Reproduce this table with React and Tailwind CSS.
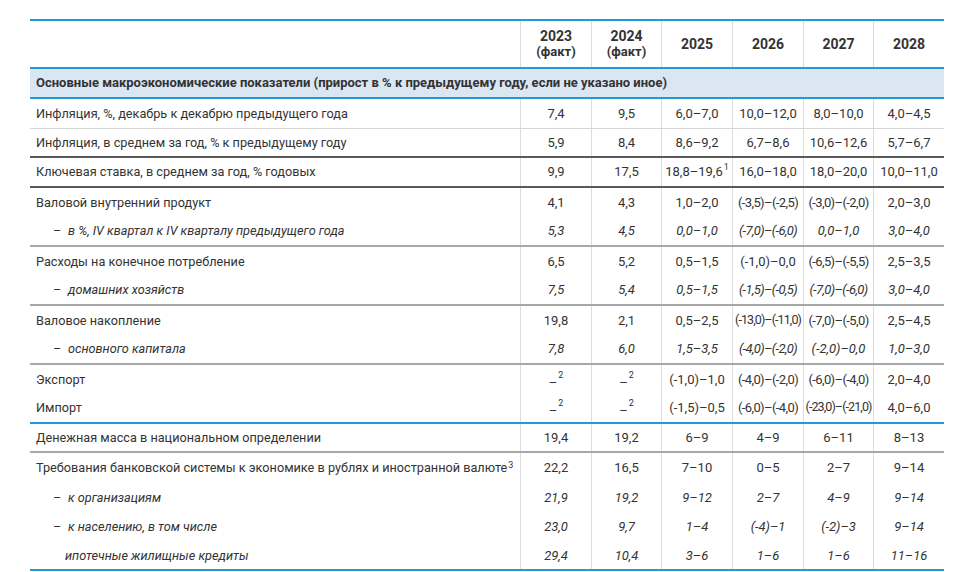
import React from "react";

const cols = ["w-[71px]", "w-[70px]", "w-[71px]", "w-[71px]", "w-[70px]", "w-[71px]"];

const lineClass = {
  light: "border-b border-[#d6d6d6]",
  dark: "border-b-2 border-[#5a5a5a]",
  mid: "border-b-2 border-[#a8a8a8]",
  blue: "border-b-2 border-[#1f9bd7]",
  none: "",
};

const rows = [
  { label: "Инфляция, %, декабрь к декабрю предыдущего года", vals: ["7,4", "9,5", "6,0–7,0", "10,0–12,0", "8,0–10,0", "4,0–4,5"], line: "light" },
  { label: "Инфляция, в среднем за год, % к предыдущему году", vals: ["5,9", "8,4", "8,6–9,2", "6,7–8,6", "10,6–12,6", "5,7–6,7"], line: "dark" },
  { label: "Ключевая ставка, в среднем за год, % годовых", vals: ["9,9", "17,5", "18,8–19,6", "16,0–18,0", "18,0–20,0", "10,0–11,0"], sup: { 2: "1" }, line: "dark" },
  { label: "Валовой внутренний продукт", vals: ["4,1", "4,3", "1,0–2,0", "(-3,5)–(-2,5)", "(-3,0)–(-2,0)", "2,0–3,0"], line: "none" },
  { label: "в %, IV квартал к IV кварталу предыдущего года", sub: true, vals: ["5,3", "4,5", "0,0–1,0", "(-7,0)–(-6,0)", "0,0–1,0", "3,0–4,0"], line: "mid" },
  { label: "Расходы на конечное потребление", vals: ["6,5", "5,2", "0,5–1,5", "(-1,0)–0,0", "(-6,5)–(-5,5)", "2,5–3,5"], line: "none" },
  { label: "домашних хозяйств", sub: true, vals: ["7,5", "5,4", "0,5–1,5", "(-1,5)–(-0,5)", "(-7,0)–(-6,0)", "3,0–4,0"], line: "mid" },
  { label: "Валовое накопление", vals: ["19,8", "2,1", "0,5–2,5", "(-13,0)–(-11,0)", "(-7,0)–(-5,0)", "2,5–4,5"], line: "none" },
  { label: "основного капитала", sub: true, vals: ["7,8", "6,0", "1,5–3,5", "(-4,0)–(-2,0)", "(-2,0)–0,0", "1,0–3,0"], line: "mid" },
  { label: "Экспорт", vals: ["–", "–", "(-1,0)–1,0", "(-4,0)–(-2,0)", "(-6,0)–(-4,0)", "2,0–4,0"], sup: { 0: "2", 1: "2" }, line: "none" },
  { label: "Импорт", vals: ["–", "–", "(-1,5)–0,5", "(-6,0)–(-4,0)", "(-23,0)–(-21,0)", "4,0–6,0"], sup: { 0: "2", 1: "2" }, line: "blue" },
  { label: "Денежная масса в национальном определении", vals: ["19,4", "19,2", "6–9", "4–9", "6–11", "8–13"], line: "mid" },
  { label: "Требования банковской системы к экономике в рублях и иностранной валюте", labelSup: "3", vals: ["22,2", "16,5", "7–10", "0–5", "2–7", "9–14"], line: "none" },
  { label: "к организациям", sub: true, vals: ["21,9", "19,2", "9–12", "2–7", "4–9", "9–14"], line: "none" },
  { label: "к населению, в том числе", sub: true, vals: ["23,0", "9,7", "1–4", "(-4)–1", "(-2)–3", "9–14"], line: "none" },
  { label: "ипотечные жилищные кредиты", sub: true, noDash: true, vals: ["29,4", "10,4", "3–6", "1–6", "1–6", "11–16"], line: "blue" },
];

const years = [
  ["2023", "(факт)"],
  ["2024", "(факт)"],
  ["2025"],
  ["2026"],
  ["2027"],
  ["2028"],
];

// tighter spacing for the long ranges so they fit the narrow columns
const fit = (v) => {
  if (v.length > 14) return "tracking-[-0.9px] text-[12.5px]";
  if (v.length > 12) return "tracking-[-0.6px]";
  if (v.length > 10) return "tracking-[-0.3px]";
  return "";
};

const Row = ({ row }) => {
  return (
    <div className={`flex h-[29.5px] ${lineClass[row.line]}`}>
      <div
        className={`w-[490px] flex items-center pl-[6px] text-[12.7px] whitespace-nowrap ${
          row.sub ? "italic" : ""
        }`}
      >
        {row.sub && !row.noDash && <span className="w-[32px] pl-[17px]">–</span>}
        {row.noDash && <span className="w-[29px]" />}
        <span>
          {row.label}
          {row.labelSup && <sup className="text-[9px] ml-[1px]">{row.labelSup}</sup>}
        </span>
      </div>
      {row.vals.map((v, i) => (
        <div
          key={i}
          className={`${cols[i]} border-l border-[#dcdcdc] flex items-center justify-center whitespace-nowrap ${
            row.sub ? "italic" : ""
          } ${fit(v)}`}
        >
          <span className={v === "–" ? "relative top-[3px]" : ""}>{v}</span>
          {row.sup && row.sup[i] && (
            <sup className="text-[9px] ml-[1px]">{row.sup[i]}</sup>
          )}
        </div>
      ))}
    </div>
  );
};

export default function App() {
  return (
    <div className="w-[974px] h-[572px] bg-white text-[#333333] text-[13px] font-['Roboto',sans-serif] pt-[19px] pl-[30px]">
      <div className="w-[914px]">
        <div className="flex h-[50px] border-t-2 border-b-2 border-[#1f9bd7]">
          <div className="w-[490px]" />
          {years.map((y, i) => (
            <div
              key={i}
              className={`${cols[i]} border-l border-[#dcdcdc] flex flex-col items-center justify-center font-bold text-[14px] leading-[16px]`}
            >
              <span>{y[0]}</span>
              {y[1] && <span className="text-[13px]">{y[1]}</span>}
            </div>
          ))}
        </div>
        <div className="h-[30px] bg-[#dae6f2] border-b-2 border-[#1f9bd7] flex items-center pl-[6px] font-bold text-[13px]">
          Основные макроэкономические показатели (прирост в % к предыдущему году, если не указано иное)
        </div>
        {rows.map((r, i) => (
          <Row key={i} row={r} />
        ))}
      </div>
    </div>
  );
}
